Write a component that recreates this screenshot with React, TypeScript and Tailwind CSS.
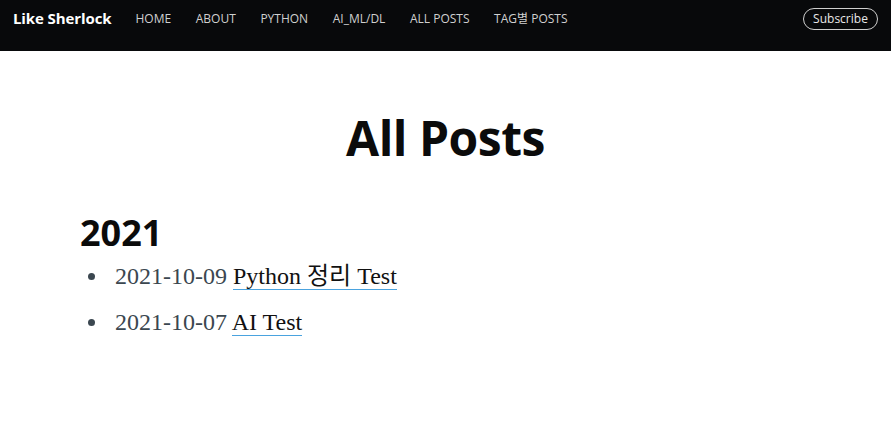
import React from "react";

export default function App() {
  const links = ["HOME", "ABOUT", "PYTHON", "AI_ML/DL", "ALL POSTS", "TAG별 POSTS"];
  const posts = [
    { date: "2021-10-09", title: "Python 정리 Test" },
    { date: "2021-10-07", title: "AI Test" },
  ];
  return (
    <div className="min-h-[423px] bg-white" style={{ fontFamily: '"Open Sans", "Noto Sans CJK KR", sans-serif' }}>
      <nav className="h-[51px] bg-[#08090b] flex items-start pl-[13px] pr-[13px]">
        <a className="mt-[8px] text-white font-bold text-[15px] tracking-[-0.1px] leading-[20px]">Like Sherlock</a>
        <ul className="flex ml-[24px] mt-[10px] gap-[24.6px]">
          {links.map((l) => (
            <li key={l} className="text-[#d0d0d0] text-[12px] leading-[17px]">{l}</li>
          ))}
        </ul>
        <button className="ml-auto mt-[8px] h-[22px] w-[75px] rounded-full border border-[#cfcfcf] text-[#e8e8e8] text-[12px] leading-[18px]">
          Subscribe
        </button>
      </nav>
      <main className="px-[80px]">
        <h1 className="text-center font-bold text-[48px] leading-[56px] mt-[59px] text-[#0b0b0b] tracking-[-0.5px]">All Posts</h1>
        <h2 className="font-bold text-[36px] leading-[44px] mt-[45px] text-[#0b0b0b]">2021</h2>
        <ul style={{ fontFamily: '"Liberation Serif", "Noto Sans CJK KR", serif' }}>
          {posts.map((p, i) => (
            <li key={p.date} className={`flex items-center text-[24px] leading-[30px] text-[#3b4750] ${i === 0 ? "mt-[6px]" : "mt-[16px]"}`}>
              <span className="w-[35px] flex justify-start pl-[8px]">
                <span className="block w-[7px] h-[7px] rounded-full bg-[#3b4750]" />
              </span>
              <span>
                {p.date}{" "}
                <a className="text-[#111] border-b border-[#4aa3df]">{p.title}</a>
              </span>
            </li>
          ))}
        </ul>
      </main>
    </div>
  );
}
